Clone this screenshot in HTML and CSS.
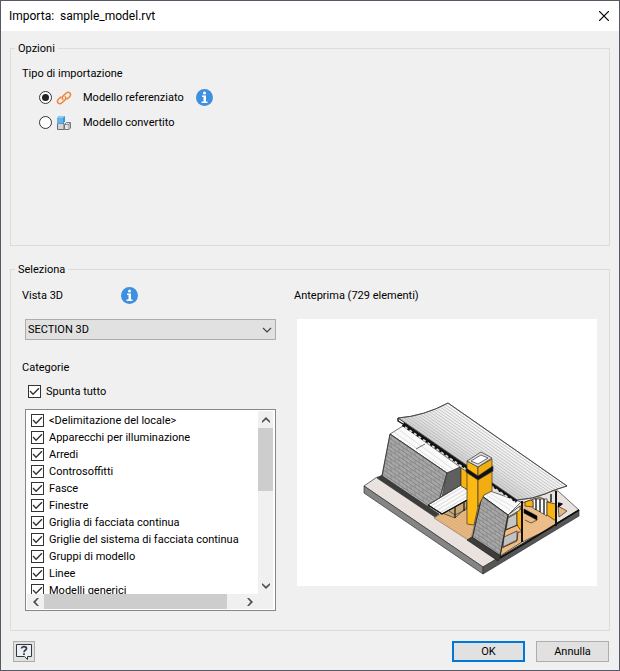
FILE: index.html
```html
<!DOCTYPE html>
<html lang="it">
<head>
<meta charset="utf-8">
<title>Importa: sample_model.rvt</title>
<link rel="stylesheet" href="styles.css">
</head>
<body>
<svg class="defs" aria-hidden="true">
  <symbol id="info" viewBox="0 0 17 17">
    <circle cx="8.500" cy="8.500" r="8.500" fill="#3d8fdf"/>
    <circle cx="8.500" cy="4" r="1.500" fill="#fff"/>
    <path d="M6 6.500h4v6h1.500v1.500h-6v-1.500h2V8H6z" fill="#fff"/>
  </symbol>
  <symbol id="chevron" viewBox="0 0 10 6">
    <path d="M1 1l4 4 4-4" fill="none" stroke="currentColor" stroke-width="1.200"/>
  </symbol>
  <symbol id="arrow" viewBox="0 0 8 6">
    <path d="M0 4l4-4 4 4v2L4 2.500 0 6z" fill="#505050"/>
  </symbol>
</svg>
<div class="dialog">
  <header class="titlebar">
    <h1 class="title">Importa:&nbsp; sample_model.rvt</h1>
    <button class="close" type="button" aria-label="Chiudi">
      <svg width="10" height="10" viewBox="0 0 10 10"><path d="M0 0l10 10M10 0L0 10" stroke="#000" stroke-width="1.200"/></svg>
    </button>
  </header>
  <form class="content">
    <fieldset class="group options">
      <legend>Opzioni</legend>
      <p class="label">Tipo di importazione</p>
      <div class="radio-row">
        <input class="radio" type="radio" name="tipo" id="ref" checked>
        <svg class="type-icon" width="16" height="16" viewBox="0 0 16 16" fill="none" stroke="#ee8540" stroke-width="1.500" stroke-linecap="round">
          <path d="M6.800 9.300c-.9-1-.8-2.200.2-3.200l3-2.800c1.200-1.100 2.900-1.200 3.900-.2s.8 2.500-.3 3.600l-2.400 2.200"/>
          <path d="M9.200 6.700c.9 1 .8 2.200-.2 3.200l-3 2.800c-1.200 1.100-2.900 1.200-3.900.2s-.8-2.500.3-3.600l2.400-2.200"/>
        </svg>
        <label class="radio-label" for="ref">Modello referenziato</label>
        <svg class="info" role="img" aria-label="Informazioni"><use href="#info"/></svg>
      </div>
      <div class="radio-row">
        <input class="radio" type="radio" name="tipo" id="conv">
        <svg class="type-icon" width="16" height="16" viewBox="0 0 16 16">
          <path d="M8.500 9.500L10.500 7.500h4V13l-1.500 1.500H8.500z" fill="#e2e3e5" stroke="#77797c"/>
          <path d="M1.500 8.500h6.500v6H1.500z" fill="#d3d4d6" stroke="#6b6d70"/>
          <path d="M8.500 9.500H13l1.500-2M13 9.500v5" fill="none" stroke="#8b8d90"/>
          <path d="M1 3l2-2h6v5.500l-2 2H1z" fill="#3a97d3"/>
          <path d="M1 3h6v5.500H1z" fill="#62b5e8"/>
          <path d="M1 3l2-2h6L7 3z" fill="#8dcbf0"/>
        </svg>
        <label class="radio-label" for="conv">Modello convertito</label>
      </div>
    </fieldset>

    <fieldset class="group">
      <legend>Seleziona</legend>
      <div class="columns">
        <div class="column">
          <div class="heading-row">
            <label class="view-label" for="vista">Vista 3D</label>
            <svg class="info" role="img" aria-label="Informazioni"><use href="#info"/></svg>
          </div>
          <div class="select-wrap">
            <select class="select" id="vista"><option>SECTION 3D</option></select>
            <svg class="select-arrow" width="10" height="6"><use href="#chevron"/></svg>
          </div>
          <p class="label categories">Categorie</p>
          <label class="check all"><input type="checkbox" checked>Spunta tutto</label>
          <div class="listbox">
            <ul class="items">
              <li><label class="check"><input type="checkbox" checked>&lt;Delimitazione del locale&gt;</label></li>
              <li><label class="check"><input type="checkbox" checked>Apparecchi per illuminazione</label></li>
              <li><label class="check"><input type="checkbox" checked>Arredi</label></li>
              <li><label class="check"><input type="checkbox" checked>Controsoffitti</label></li>
              <li><label class="check"><input type="checkbox" checked>Fasce</label></li>
              <li><label class="check"><input type="checkbox" checked>Finestre</label></li>
              <li><label class="check"><input type="checkbox" checked>Griglia di facciata continua</label></li>
              <li><label class="check"><input type="checkbox" checked>Griglie del sistema di facciata continua</label></li>
              <li><label class="check"><input type="checkbox" checked>Gruppi di modello</label></li>
              <li><label class="check"><input type="checkbox" checked>Linee</label></li>
              <li><label class="check"><input type="checkbox" checked>Modelli generici</label></li>
            </ul>
            <div class="bar vertical" aria-hidden="true">
              <span class="step"><svg width="8" height="6"><use href="#arrow"/></svg></span>
              <span class="track"><span class="thumb"></span></span>
              <span class="step down"><svg width="8" height="6"><use href="#arrow"/></svg></span>
            </div>
            <div class="bar horizontal" aria-hidden="true">
              <span class="step left"><svg width="8" height="6"><use href="#arrow"/></svg></span>
              <span class="track"><span class="thumb"></span></span>
              <span class="step right"><svg width="8" height="6"><use href="#arrow"/></svg></span>
            </div>
            <div class="corner"></div>
          </div>
        </div>
        <div class="column">
          <div class="heading-row">Anteprima (729 elementi)</div>
          <div class="preview">
            <svg class="model" viewBox="297 319 300 267" role="img" aria-label="Anteprima del modello">
              <defs>
                <pattern id="ribs" width="4" height="3" patternUnits="userSpaceOnUse" patternTransform="translate(448 403) skewY(34.700)">
                  <path d="M0 .5h4" stroke="#b0b0b0" stroke-width=".6"/>
                </pattern>
                <pattern id="brick" width="8" height="8" patternUnits="userSpaceOnUse" patternTransform="translate(390 434) skewY(34.400)">
                  <path d="M0 .5h8M0 4.500h8M1 .5v4M5 4.500v4" stroke="#777" stroke-width=".6"/>
                </pattern>
                <pattern id="boards" width="3" height="3" patternUnits="userSpaceOnUse" patternTransform="skewY(34)">
                  <path d="M0 1h3" stroke="#c7935a" stroke-width=".6"/>
                </pattern>
                <pattern id="awning" width="3" height="4" patternUnits="userSpaceOnUse" patternTransform="skewY(-31)">
                  <path d="M0 1h3" stroke="#b5b5b5" stroke-width=".6"/>
                </pattern>
                <linearGradient id="shade" gradientUnits="userSpaceOnUse" x1="440" y1="482" x2="482" y2="420">
                  <stop offset="0" stop-color="#a2a2a2"/><stop offset=".25" stop-color="#c0c0c0"/><stop offset=".6" stop-color="#e6e6e6"/><stop offset="1" stop-color="#fcfcfc"/>
                </linearGradient>
              </defs>
              <g stroke="#333" stroke-width=".7" stroke-linejoin="round">
                <path d="M364 486l13-9 181 14 21 19-96 57z" fill="#e9e2de"/>
                <path d="M364 486l119 81v7l-119-81z" fill="#858585"/>
                <path d="M483 567l96-57v6l-96 58z" fill="#565656"/>
                <path d="M377 478l5-3 57 39-4 3z" fill="#3c3c3c"/>
                <path d="M434 518l33-20 14 2-10 38-3 2z" fill="#ecbd88" stroke-width=".4"/>
                <path d="M434 518l33-20 14 2-10 38-3 2z" fill="url(#boards)" stroke="none"/>
                <path d="M390 434l13-8 57 41-13 6z" fill="#fafafa"/>
                <path d="M394 432l57 41M398 429l56 41" stroke="#d4d4d4"/>
                <path d="M416 449l9-5" fill="none"/>
                <path d="M390 434l57 39-8 28-11 6-46-31z" fill="#a6a6a6"/>
                <path d="M390 434l57 39-8 28-11 6-46-31z" fill="url(#brick)"/>
                <path d="M447 473l14-6v19l-19 11z" fill="#5f5f5f"/>
                <path d="M442 513l25-14v8l-12 11z" fill="#c9a878"/>
                <path d="M449 511l6 4 12-6v-7" fill="none"/>
                <path d="M455 507v11M464 502v9" stroke="#111" stroke-width="1.200"/>
                <path d="M428 505l33-20 7 5v10l-26 14z" fill="#fff"/>
                <path d="M428 505l33-20 7 5v10l-26 14z" fill="url(#awning)"/>
                <path d="M428 505l14 9 25-14" fill="none" stroke="#111" stroke-width="1.200"/>
              </g>
              <g stroke="#111" stroke-width=".6" stroke-linejoin="round">
                <path d="M522 503l18-6 16 9v20l-34 16z" fill="#ecbd88"/>
                <path d="M558 506l9 5-8 6z" fill="#e6b77f"/>
                <path d="M533 499l14 0v17l-14-8z" fill="#fafafa"/>
                <path d="M536 499v11M540 499v13M544 499v15" stroke-width="1.300"/>
                <path d="M547 502l9 2v17l-9-6z" fill="#fbb40f"/>
                <path d="M525 502l6-2 2 2v5l-8-1z" fill="#fbb40f"/>
                <path d="M524 509l13 7v4l-13-7z"/>
                <path d="M537 520l-6 3-6-3" fill="none"/>
                <path d="M508 515l14-10v37l-22 14z" fill="#efbb82"/>
                <path d="M508 518l9-5v12l-11 5z" fill="#c6c6c6"/>
                <path d="M517 511l5-3v24l-5-7z" fill="#fbb40f"/>
                <path d="M504 537l13-6v9l-14 7z" fill="#c2c2c2"/>
                <path d="M505 530l13-5M502 548l15-7 1-9h3" fill="none"/>
                <path d="M500 558l24-14 55-34" fill="none" stroke-width="1.600"/>
                <path d="M482 496l8-5 31 11-13 13z" fill="#fafafa"/>
                <path d="M485 494l27 17M487 492l28 16" stroke="#d4d4d4"/>
                <path d="M508 515l12-9v4l-12 7z" fill="#e9e9e9"/>
                <path d="M482 496l26 19-8 41-28-17z" fill="#a6a6a6"/>
                <path d="M482 496l26 19-8 41-28-17z" fill="url(#brick)"/>
                <path d="M467 540l5-3 29 19-3 5z" fill="#3c3c3c"/>
                <path d="M522 501v41M556 491v35" stroke-width="2"/>
                <path d="M551 494v8M558 503l4 1-4 3" stroke-width="1.400"/>
              </g>
              <g stroke="#333" stroke-width=".7" stroke-linejoin="round">
                <path d="M403 424l64 44 50 33" fill="none" stroke="#111" stroke-width="4"/>
                <path d="M405 427l62 43 48 32" fill="none" stroke="#ddd" stroke-width="1.600" stroke-dasharray="3 2.500"/>
                <path d="M398 418v3l5 3" fill="none" stroke="#111" stroke-width="1.400"/>
                <path d="M398 418q26-2 50-15l119 83q-14 4-22 8-12 5-28 6z" fill="url(#shade)"/>
                <path d="M398 418q26-2 50-15l119 83q-14 4-22 8-12 5-28 6z" fill="url(#ribs)"/>
                <path d="M461 468l7 4v18l-7-4z" fill="#fbb40f"/>
                <path d="M467 461l11 6v40l-4 18-7-1z" fill="#fdb913"/>
                <path d="M478 467l14-8v32l-8 4-6 12z" fill="#f2ae10"/>
                <path d="M467 461l14-9 11 6-14 9z" fill="#dcdcdc"/>
                <path d="M471 461l10-6 7 3-10 6z" fill="#fff"/>
                <path d="M466 468l12 8 15-10v5l-15 9-12-8z" fill="#111"/>
              </g>
            </svg>
          </div>
        </div>
      </div>
    </fieldset>

    <footer class="footer">
      <button class="help" type="button" aria-label="Guida">
        <svg width="16" height="16" viewBox="0 0 16 16">
          <path d="M.5.500h15v12h-4v3l-3-3h-8z" fill="#edf0f4" stroke="#33373e"/>
          <path d="M5.500 4.500c0-2.500 5-2.500 5 0C10.500 6.500 8 6 8 8.200M8 9.300V11" fill="none" stroke="#33373e" stroke-width="1.700"/>
        </svg>
      </button>
      <button class="button primary" type="submit">OK</button>
      <button class="button" type="button">Annulla</button>
    </footer>
  </form>
</div>
</body>
</html>
```
FILE: styles.css
```css
* { box-sizing: border-box; }

body {
  margin: 0;
  font: 11px/15px Roboto, "Liberation Sans", sans-serif;
  color: #000;
}

.defs { position: absolute; width: 0; height: 0; }
svg { display: block; flex: none; }

.dialog {
  display: flex;
  flex-direction: column;
  min-height: 100vh;
  border: 1px solid #545965;
  background: #f0f0f0;
}

.titlebar {
  display: flex;
  align-items: center;
  justify-content: space-between;
  height: 30px;
  padding: 0 10px 0 8px;
  background: #fff;
}
.title { margin: 0; font-size: 12px; font-weight: normal; }
.close { padding: 0; border: 0; background: none; }

.content {
  display: flex;
  flex: 1;
  flex-direction: column;
  padding: 10px 9px 8px;
}

.group {
  min-width: 0;
  margin: 0;
  padding: 10px 12px 19px 11px;
  border: 1px solid #dcdcdc;
}
.group legend { margin-left: -7px; padding: 0 3px; }
.options { flex: 1; margin-bottom: 16px; }

.label { margin: 0; }
.info { width: 17px; height: 17px; }

.radio-row {
  display: flex;
  align-items: center;
  height: 17px;
  margin-top: 8px;
  padding-left: 17px;
}
.radio {
  appearance: none;
  display: grid;
  place-items: center;
  width: 13px;
  height: 13px;
  margin: 0;
  border: 1px solid #333;
  border-radius: 50%;
  background: #fff;
}
.radio:checked::before {
  content: "";
  width: 7px;
  height: 7px;
  border-radius: 50%;
  background: #222;
}
.type-icon { margin: 0 11px 0 4px; }
.radio-label { min-width: 113px; }

.columns {
  display: grid;
  grid-template-columns: 254px 1fr;
  column-gap: 18px;
}
.heading-row {
  display: flex;
  align-items: center;
  height: 17px;
  margin-bottom: 15px;
}
.view-label { width: 99px; }

.select-wrap { position: relative; margin-left: 3px; }
.select {
  appearance: none;
  display: block;
  width: 100%;
  height: 21px;
  padding: 0 24px 0 2px;
  border: 1px solid #adadad;
  border-radius: 0;
  background: #e1e1e1;
  color: #000;
  font: inherit;
}
.select-arrow {
  position: absolute;
  top: 8px;
  right: 4px;
  color: #444;
  pointer-events: none;
}
.categories { margin-top: 20px; }

.check { display: flex; align-items: center; gap: 5px; white-space: nowrap; }
.check input {
  appearance: none;
  flex: none;
  width: 13px;
  height: 13px;
  margin: 0;
  border: 1px solid #333;
  background: #fff;
}
.check input:checked::before {
  content: "";
  display: block;
  width: 11px;
  height: 11px;
  background: #333;
  clip-path: polygon(5% 50%, 14% 42%, 37% 66%, 86% 15%, 95% 24%, 37% 83%);
}
.all { margin: 9px 0 10px 6px; }

.listbox {
  display: grid;
  grid-template: 183px 15px / 1fr 15px;
  margin-left: 3px;
  padding: 1px 2px 1px 1px;
  border: 1px solid #828790;
  background: #fff;
}
.items { margin: 0; padding: 1px 0 0 4px; overflow: hidden; list-style: none; }
.items .check { height: 17px; }

.bar { display: flex; background: #f0f0f0; }
.vertical { flex-direction: column; }
.step { display: grid; place-items: center; flex: 0 0 17px; }
.down svg { transform: rotate(180deg); }
.left svg { transform: rotate(-90deg); }
.right svg { transform: rotate(90deg); }
.track { display: flex; flex: 1; flex-direction: inherit; }
.thumb { background: #cdcdcd; }
.vertical .thumb { height: 42%; }
.horizontal .thumb { width: 93%; }
.corner { background: #f0f0f0; }

.preview { margin-left: 3px; background: #fff; }
.model { width: 100%; height: auto; }

.footer { display: flex; gap: 11px; margin-top: 10px; padding-right: 1px; }
.help, .button {
  height: 21px;
  padding: 0;
  border: 1px solid #adadad;
  background: #e1e1e1;
  color: #000;
  font: inherit;
}
.help { display: grid; place-items: center; width: 22px; margin: 0 auto 0 3px; }
.button { width: 73px; }
.primary { border: 2px solid #0078d7; }
```
